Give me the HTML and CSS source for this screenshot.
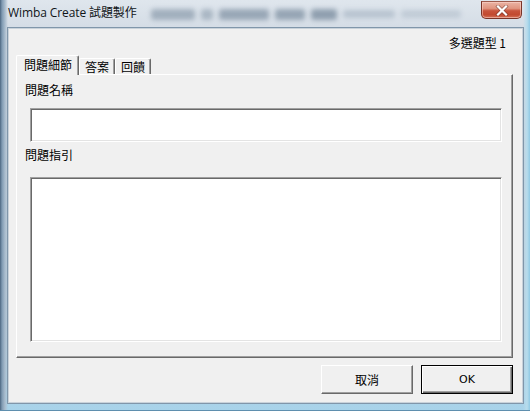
FILE: index.html
```html
<!DOCTYPE html>
<html lang="zh-Hant">
<head>
<meta charset="utf-8">
<title>Wimba Create 試題製作</title>
<link rel="stylesheet" href="styles.css">
</head>
<body>
<div class="window">
  <div class="titlebar">
    <span class="title">Wimba Create 試題製作</span>
    <div class="glass-blur" aria-hidden="true">
      <i class="blob b1"></i><i class="blob b2"></i><i class="blob b3"></i><i class="blob b4"></i><i class="blob b5"></i><i class="blob b6"></i><i class="blob b7"></i>
    </div>
    <button class="close" aria-label="關閉">
      <svg width="14" height="11" viewBox="0 0 14 11">
        <path d="M3 1.5 L11 9.5 M11 1.5 L3 9.5" stroke="#5a2a22" stroke-width="3.6" stroke-linecap="square" fill="none" opacity="0.55"/>
        <path d="M3 1.5 L11 9.5 M11 1.5 L3 9.5" stroke="#ffffff" stroke-width="2.2" stroke-linecap="square" fill="none"/>
      </svg>
    </button>
  </div>
  <div class="client">
    <div class="qtype">多選題型 1</div>
    <div class="tabs">
      <div class="tab active">問題細節</div>
      <div class="tab">答案</div>
      <div class="tab">回饋</div>
    </div>
    <div class="panel">
      <div class="label">問題名稱</div>
      <div class="field field-name"></div>
      <div class="label label-guide">問題指引</div>
      <div class="field field-guide"></div>
    </div>
    <div class="actions">
      <button class="btn">取消</button>
      <button class="btn btn-default">OK</button>
    </div>
  </div>
</div>
</body>
</html>
```

FILE: styles.css
```css
* { box-sizing: border-box; }

html, body {
  margin: 0;
  padding: 0;
  width: 530px;
  height: 411px;
  overflow: hidden;
}

body {
  font-family: "Noto Sans CJK TC", "Noto Sans", sans-serif;
  font-size: 12px;
  color: #000;
}

.window {
  width: 530px;
  height: 411px;
  display: flex;
  flex-direction: column;
  padding: 0 7px 8px 8px;
  background:
    linear-gradient(90deg, #4c6680 0, #7f9ab2 2px, #a9bccd 5px, rgba(200,214,226,0) 8px),
    linear-gradient(270deg, #8fc9e4 0, #b8dcec 3px, rgba(200,220,232,0) 7px),
    linear-gradient(180deg, #dfe6ed 0, #d5dde6 26px, #c3d0dc 40%, #b7cddc 80%, #a8d3ea 100%);
  box-shadow: inset 0 -1px 0 #5f8fae;
}

.titlebar {
  height: 28px;
  flex: none;
  display: flex;
  align-items: flex-start;
}

.title {
  font-family: "Open Sans", "Noto Sans CJK TC", sans-serif;
  font-size: 12px;
  line-height: 16px;
  margin-top: 5px;
  color: #101418;
  white-space: nowrap;
  letter-spacing: -0.1px;
}

.glass-blur {
  margin-top: 7px;
  margin-left: 14px;
  width: 318px;
  height: 14px;
  display: flex;
  align-items: center;
  gap: 6px;
  filter: blur(2.6px);
  opacity: 0.6;
}

.blob {
  display: block;
  height: 11px;
  background: #7d8fa1;
  border-radius: 3px;
}
.b1 { width: 44px; }
.b2 { width: 12px; background: #8a9bab; }
.b3 { width: 50px; background: #6e8195; }
.b4 { width: 30px; background: #6a7e92; }
.b5 { width: 26px; background: #5f7489; }
.b6 { width: 52px; background: #a2b1c0; height: 8px; }
.b7 { width: 60px; background: #b0bdca; height: 8px; }

.close {
  margin-left: auto;
  margin-top: 1px;
  margin-right: 1px;
  width: 41px;
  height: 18px;
  padding: 0;
  border: 1px solid #7a3428;
  border-top-color: #9c5a4c;
  border-radius: 0 0 5px 5px;
  background: linear-gradient(180deg, #eab3a4 0, #e09580 40%, #c8543c 55%, #c24a30 80%, #d6735a 100%);
  box-shadow: inset 0 0 0 1px rgba(255,220,210,0.5);
  display: flex;
  align-items: center;
  justify-content: center;
}

.client {
  flex: 1;
  background: #f0f0f0;
  border: 1px solid #c9d2da;
  box-shadow: 0 0 0 1px #8096aa;
  padding: 7px 9px 8px 7px;
  display: flex;
  flex-direction: column;
}

.qtype {
  height: 14px;
  line-height: 14px;
  text-align: right;
  padding-right: 7px;
}

.tabs {
  margin-top: 5px;
  height: 19px;
  display: flex;
  align-items: flex-end;
  position: relative;
  z-index: 1;
}

.tab {
  height: 16px;
  line-height: 15px;
  padding: 0 5px 0 5px;
  background: #f0f0f0;
  border-top: 1px solid #ffffff;
  border-left: 1px solid #ffffff;
  border-right: 1px solid #696969;
  box-shadow: inset -1px 0 0 #a0a0a0;
  border-radius: 2px 2px 0 0;
  white-space: nowrap;
}

.tab.active {
  height: 20px;
  margin-bottom: -1px;
  line-height: 17px;
  width: 63px;
  padding: 0 0 0 7px;
}

.panel {
  height: 284px;
  flex: none;
  border-top: 1px solid #ffffff;
  border-left: 1px solid #ffffff;
  border-right: 1px solid #696969;
  border-bottom: 1px solid #696969;
  box-shadow: inset -1px -1px 0 #a0a0a0;
  padding: 8px 10px 0 8px;
  display: flex;
  flex-direction: column;
}

.label {
  height: 14px;
  line-height: 14px;
}

.label-guide {
  margin-top: 6px;
}

.field {
  margin-left: 5px;
  background: #ffffff;
  border: 1px solid;
  border-color: #a0a0a0 #ffffff #ffffff #a0a0a0;
  box-shadow: inset 1px 1px 0 #696969, inset -1px -1px 0 #e3e3e3;
}

.field-name {
  margin-top: 11px;
  height: 34px;
}

.field-guide {
  margin-top: 15px;
  height: 165px;
}

.actions {
  margin-top: 7px;
  display: flex;
  justify-content: flex-end;
  gap: 8px;
}

.btn {
  width: 92px;
  height: 29px;
  padding: 0;
  margin: 0;
  background: #f0f0f0;
  border: 1px solid;
  border-color: #ffffff #696969 #696969 #ffffff;
  box-shadow: inset -1px -1px 0 #a0a0a0;
  font-family: "Noto Sans CJK TC", "Noto Sans", sans-serif;
  font-size: 12px;
  color: #000;
  line-height: 14px;
}

.btn-default {
  border: 1px solid #000000;
  box-shadow: inset 1px 1px 0 #ffffff, inset -1px -1px 0 #696969, inset -2px -2px 0 #a0a0a0;
  font-family: "DejaVu Sans", "Liberation Sans", sans-serif;
  font-size: 11px;
}
```
